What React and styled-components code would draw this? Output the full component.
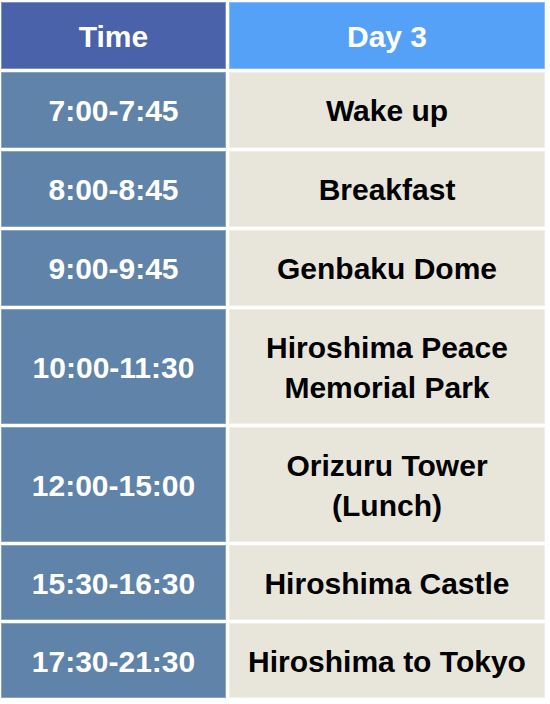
import React from 'react';
import styled, { createGlobalStyle } from 'styled-components';

const GlobalStyle = createGlobalStyle`
    html, body {
        margin:0;
        padding:0;
        background:#ffffff;
    }
    body {
        font-family:"Liberation Sans", Arial, Helvetica, sans-serif;
    }
`;

const Table = styled.div`
    display:grid;
    grid-template-columns:225px 316px;
    column-gap:3px;
    row-gap:3px;
    padding:2px 0 0 1px;
    width:max-content;
`;

const Cell = styled.div`
    display:flex;
    align-items:center;
    justify-content:center;
    text-align:center;
    box-sizing:border-box;
    height:${p => p.h}px;
    padding:2px 4px 0;
    font-size:30px;
    font-weight:700;
    line-height:40px;
    background:${p => p.bg};
    border:1px solid ${p => p.edge};
    color:${p => p.fg};
`;

const rows = [
    { time: '7:00-7:45', what: ['Wake up'], h: 76 },
    { time: '8:00-8:45', what: ['Breakfast'], h: 76 },
    { time: '9:00-9:45', what: ['Genbaku Dome'], h: 76 },
    { time: '10:00-11:30', what: ['Hiroshima Peace', 'Memorial Park'], h: 115 },
    { time: '12:00-15:00', what: ['Orizuru Tower', '(Lunch)'], h: 115 },
    { time: '15:30-16:30', what: ['Hiroshima Castle'], h: 75 },
    { time: '17:30-21:30', what: ['Hiroshima to Tokyo'], h: 75 },
];

const App = () => (
    <>
        <GlobalStyle />
        <Table>
            <Cell h={67} bg="#4a62a9" edge="#7f92c4" fg="#ffffff">Time</Cell>
            <Cell h={67} bg="#55a1f7" edge="#86bdf9" fg="#ffffff">Day 3</Cell>
            {rows.map(r => (
                <React.Fragment key={r.time}>
                    <Cell h={r.h} bg="#6083a9" edge="#8aa3c0" fg="#ffffff">{r.time}</Cell>
                    <Cell h={r.h} bg="#e8e6db" edge="#efeee7" fg="#000000">
                        <div>
                            {r.what.map(line => <div key={line}>{line}</div>)}
                        </div>
                    </Cell>
                </React.Fragment>
            ))}
        </Table>
    </>
);

export default App;
